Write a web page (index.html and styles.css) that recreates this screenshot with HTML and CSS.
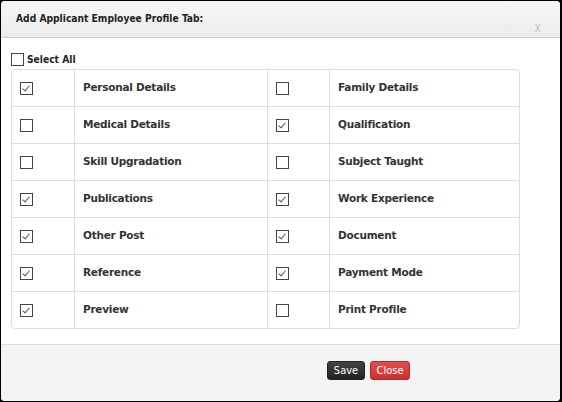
FILE: index.html
```html
<!DOCTYPE html>
<html>
<head>
<meta charset="utf-8">
<link rel="stylesheet" href="styles.css">
</head>
<body>
<div class="dialog">
  <div class="header">
    <div class="title">Add Applicant Employee Profile Tab:</div>
    <div class="close-x">X</div>
  </div>
  <div class="body">
    <label class="select-all"><span class="cb big"></span>Select All</label>
    <div class="grid">
      <div class="row"><div class="c1"><span class="cb on"></span></div><div class="c2">Personal Details</div><div class="c1"><span class="cb"></span></div><div class="c2 last">Family Details</div></div>
      <div class="row"><div class="c1"><span class="cb"></span></div><div class="c2">Medical Details</div><div class="c1"><span class="cb on"></span></div><div class="c2 last">Qualification</div></div>
      <div class="row"><div class="c1"><span class="cb"></span></div><div class="c2">Skill Upgradation</div><div class="c1"><span class="cb"></span></div><div class="c2 last">Subject Taught</div></div>
      <div class="row"><div class="c1"><span class="cb on"></span></div><div class="c2">Publications</div><div class="c1"><span class="cb on"></span></div><div class="c2 last">Work Experience</div></div>
      <div class="row"><div class="c1"><span class="cb on"></span></div><div class="c2">Other Post</div><div class="c1"><span class="cb on"></span></div><div class="c2 last">Document</div></div>
      <div class="row"><div class="c1"><span class="cb on"></span></div><div class="c2">Reference</div><div class="c1"><span class="cb on"></span></div><div class="c2 last">Payment Mode</div></div>
      <div class="row lastrow"><div class="c1"><span class="cb on"></span></div><div class="c2">Preview</div><div class="c1"><span class="cb"></span></div><div class="c2 last">Print Profile</div></div>
    </div>
  </div>
  <div class="footer">
    <button class="btn save">Save</button>
    <button class="btn close">Close</button>
  </div>
</div>
</body>
</html>
```
FILE: styles.css
```css
html, body { margin: 0; padding: 0; }
body {
  background: #000;
  width: 562px;
  height: 402px;
  overflow: hidden;
  font-family: "DejaVu Sans", Verdana, sans-serif;
  font-size: 11px;
  color: #333;
}
.dialog {
  margin: 1px 2px 1px 1px;
  width: 559px;
  height: 400px;
  background: #fff;
  border-radius: 4px;
  overflow: hidden;
  display: flex;
  flex-direction: column;
}
.header {
  height: 36px;
  border-bottom: 1px solid #ccc;
  background: linear-gradient(#f6f6f6, #ececec);
  position: relative;
}
.title {
  position: absolute;
  left: 15px;
  top: 12px;
  font-weight: bold;
  font-size: 10.2px;
  font-stretch: condensed;
  color: #222;
}
.close-x {
  position: absolute;
  right: 18px;
  top: 21px;
  font-size: 11px;
  color: #bbb;
  transform: scaleX(0.8);
}
.body {
  flex: 1;
  padding: 14px 10px 0 10px;
  border-bottom: 1px solid #ddd;
}
.select-all {
  display: flex;
  align-items: center;
  font-weight: bold;
  font-size: 10.2px;
  font-stretch: condensed;
  color: #222;
  height: 14px;
}
.cb {
  display: inline-block;
  width: 11px;
  height: 11px;
  border: 1px solid #444;
  background: #fff;
  box-sizing: content-box;
  position: relative;
}
.cb.big { width: 11px; height: 11px; margin-right: 3px; }
.cb.on::after {
  content: "";
  position: absolute;
  left: 3px;
  top: 1px;
  width: 3px;
  height: 6px;
  border-right: 1px solid #555;
  border-bottom: 1px solid #555;
  transform: rotate(40deg);
}
.grid {
  margin-top: 3px;
  width: 507px;
  border: 1px solid #ddd;
  border-radius: 4px;
}
.row {
  display: grid;
  grid-template-columns: 63px 193px 62px 1fr;
  height: 37px;
  border-bottom: 1px solid #ddd;
  box-sizing: border-box;
}
.row.lastrow { border-bottom: none; height: 36px; }
.c1, .c2 {
  border-right: 1px solid #ddd;
  display: flex;
  align-items: center;
}
.c1 { padding-left: 8px; padding-top: 1px; }
.c2 {
  padding-left: 8px;
  padding-bottom: 2px;
  font-weight: bold;
  font-size: 10.5px;
  letter-spacing: -0.25px;
  color: #333;
}
.c2.last { border-right: none; }
.footer {
  height: 56px;
  flex: none;
  background: #f4f4f4;
  display: flex;
  justify-content: flex-start;
  align-items: flex-start;
  padding-left: 326px;
  padding-top: 16px;
  box-sizing: border-box;
  gap: 5px;
}
.btn {
  height: 19px;
  border-radius: 3px;
  font-family: "DejaVu Sans", Verdana, sans-serif;
  font-stretch: condensed;
  font-size: 11px;
  color: #fff;
  padding: 0 4px;
  border: 1px solid;
}
.btn.save {
  width: 38px;
  background: linear-gradient(#444, #222);
  border-color: #222;
}
.btn.close {
  width: 40px;
  background: linear-gradient(#e05050, #c83030);
  border-color: #b02828;
}
```
